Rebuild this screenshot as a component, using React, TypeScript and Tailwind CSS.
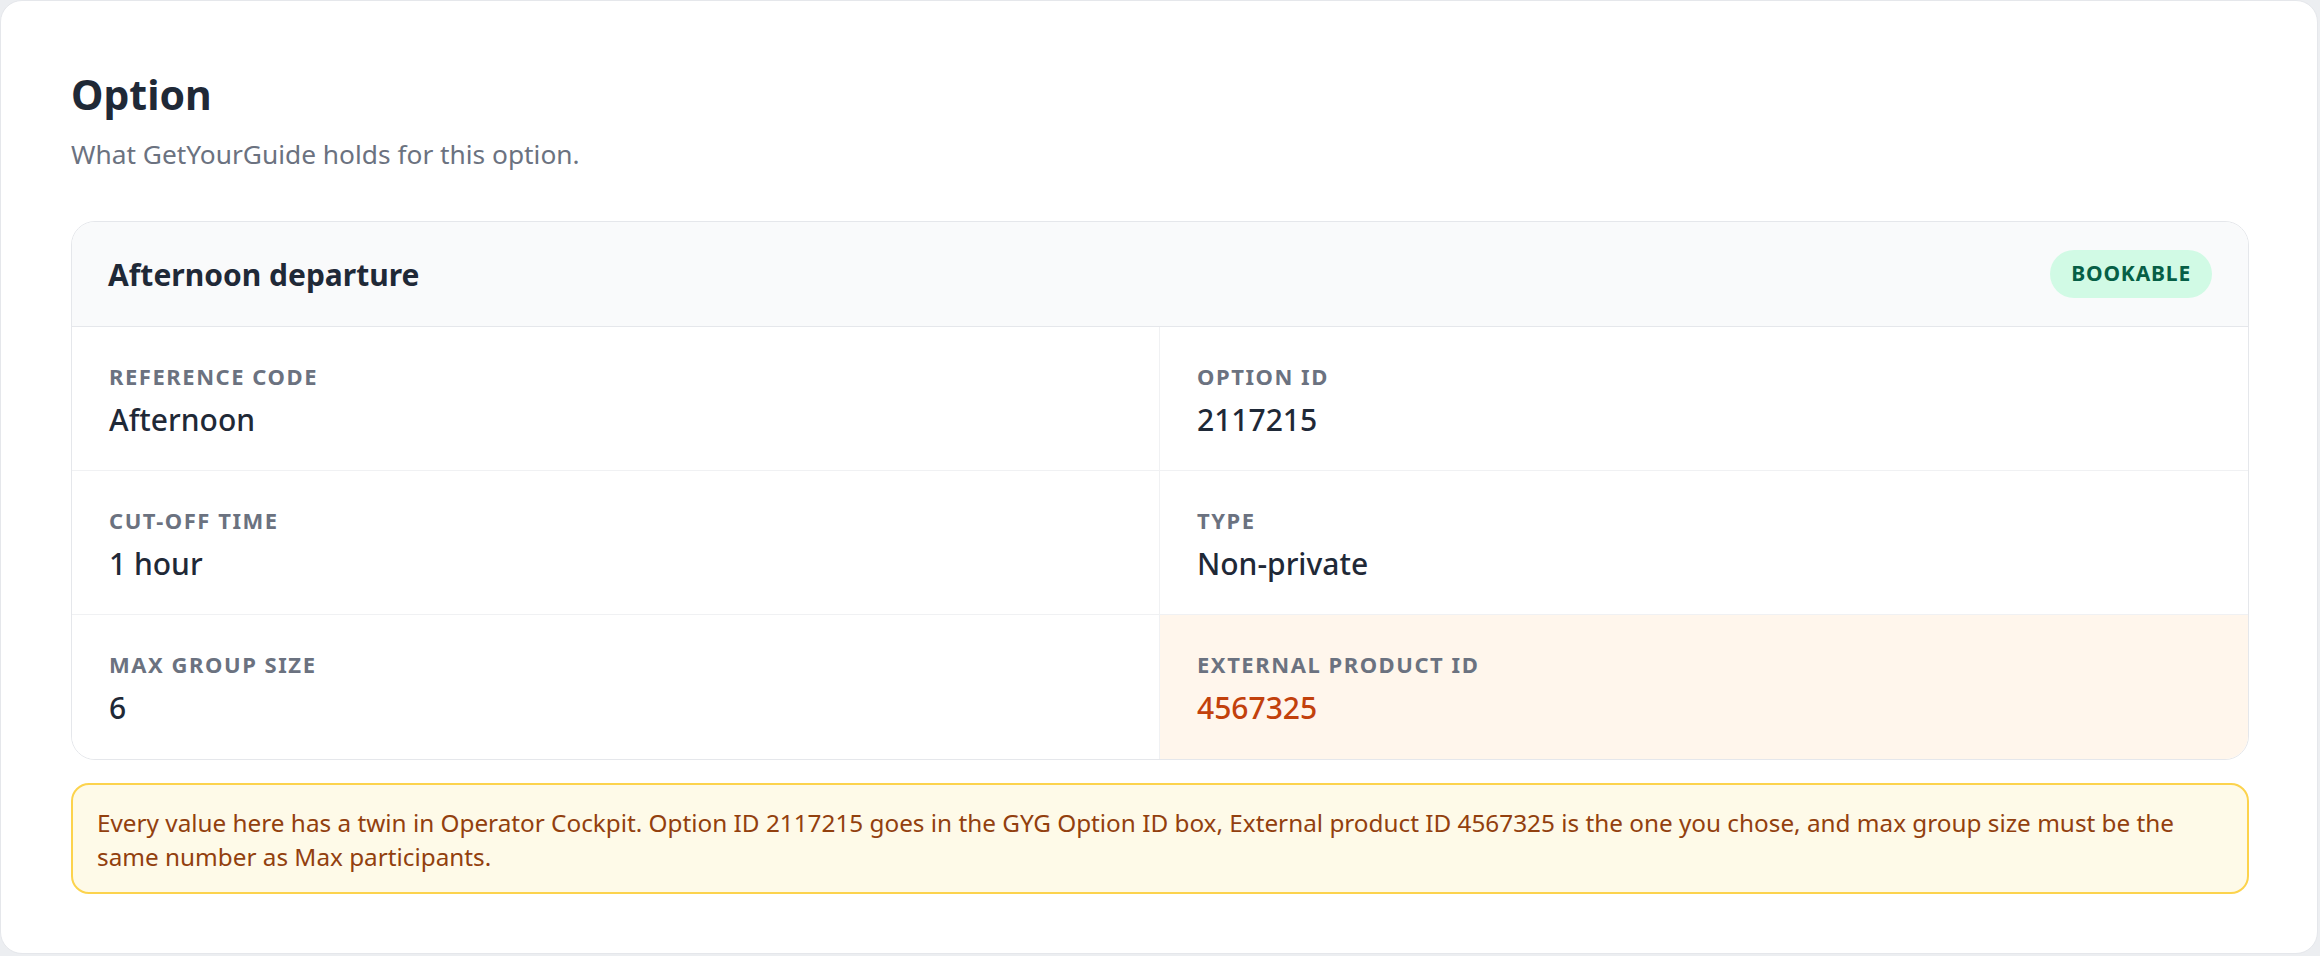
import React from 'react'

interface Field {
  label: string
  value: string
  highlight?: boolean
}

const fields: Field[] = [
  { label: 'Reference code', value: 'Afternoon' },
  { label: 'Option ID', value: '2117215' },
  { label: 'Cut-off time', value: '1 hour' },
  { label: 'Type', value: 'Non-private' },
  { label: 'Max group size', value: '6' },
  { label: 'External product ID', value: '4567325', highlight: true },
]

function FieldCell({ field, index }: { field: Field; index: number }) {
  const isLeft = index % 2 === 0
  const isLastRow = index >= fields.length - 2

  return (
    <div
      className={[
        'flex h-[144px] flex-col gap-[10px] px-[37px] pt-[35px]',
        isLeft ? 'border-r border-[#f0f1f3]' : '',
        isLastRow ? '' : 'border-b border-[#f0f1f3]',
        field.highlight ? 'bg-[#fff6ec]' : 'bg-white',
      ].join(' ')}
    >
      <div className="text-[22px] leading-[28px] font-bold uppercase tracking-[0.07em] text-[#6b7280]">
        {field.label}
      </div>
      <div
        className={`text-[30px] leading-[40px] font-medium ${
          field.highlight ? 'text-[#c2410c]' : 'text-[#1f2937]'
        }`}
      >
        {field.value}
      </div>
    </div>
  )
}

export default function App() {
  return (
    <div className="min-h-screen bg-[#eceef1] pr-[2px] pb-[2px] font-['Noto_Sans',sans-serif]">
      <div className="flex h-[954px] flex-col rounded-[22px] border border-[#e5e7eb] bg-white pt-[69px] pl-[70px] pr-[68px]">
        <h1 className="text-[41px] leading-[49px] font-bold text-[#1f2937]">Option</h1>
        <p className="mt-[17px] text-[26.3px] leading-[36px] text-[#6b7280]">
          What GetYourGuide holds for this option.
        </p>

        <div className="mt-[49px] overflow-hidden rounded-[24px] border border-[#e5e7eb]">
          <div className="flex h-[105px] items-center justify-between border-b border-[#e5e7eb] bg-[#f9fafb] px-[36px]">
            <h2 className="text-[30px] font-bold text-[#1f2937]">Afternoon departure</h2>
            <span className="flex h-[48px] items-center rounded-full bg-[#d1fae5] px-[21px] text-[21px] font-bold tracking-[0.04em] text-[#065f46]">
              BOOKABLE
            </span>
          </div>
          <div className="grid grid-cols-2">
            {fields.map((field, i) => (
              <FieldCell key={field.label} field={field} index={i} />
            ))}
          </div>
        </div>

        <div className="mt-[23px] rounded-[18px] border-2 border-[#fcd34d] bg-[#fefae8] px-[24px] pt-[21px] pb-[18px] text-[24.3px] leading-[34px] text-[#92400e]">
          Every value here has a twin in Operator Cockpit. Option ID 2117215 goes in the GYG Option ID
          box, External product ID 4567325 is the one you chose, and max group size must be the same
          number as Max participants.
        </div>
      </div>
    </div>
  )
}
